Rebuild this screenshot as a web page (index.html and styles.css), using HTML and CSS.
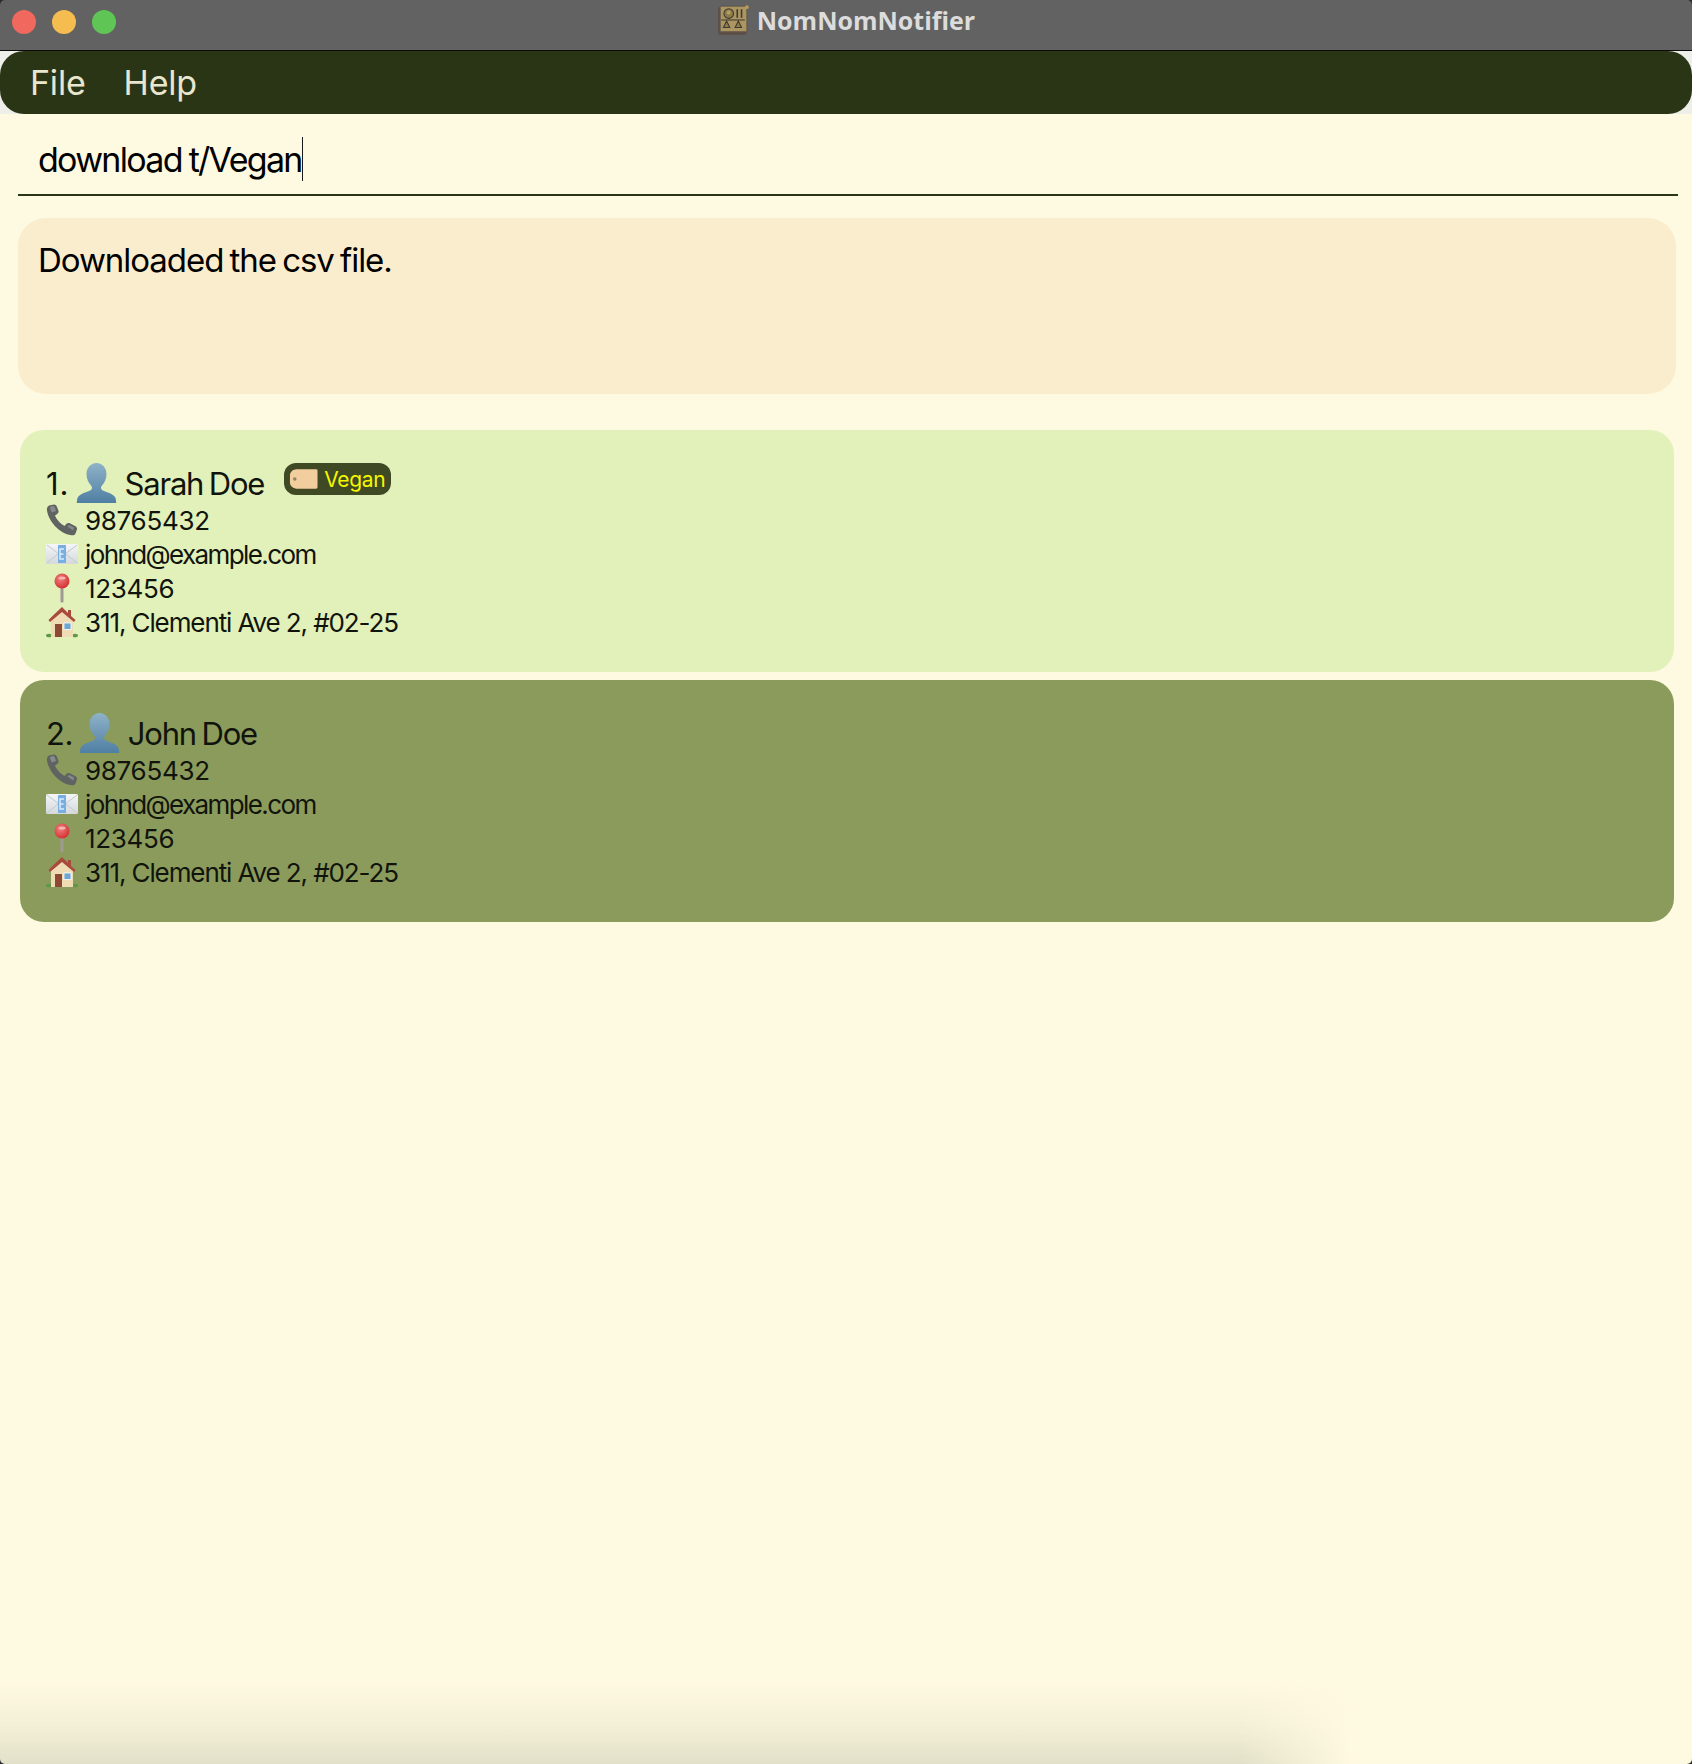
FILE: index.html
```html
<!DOCTYPE html>
<html lang="en">
<head>
<meta charset="utf-8">
<title>NomNomNotifier</title>
<link rel="stylesheet" href="styles.css">
</head>
<body>
<svg class="defs" width="0" height="0" aria-hidden="true">
  <defs>
    <linearGradient id="bust" x1="0" y1="0" x2="0" y2="1"><stop offset="0" stop-color="#8fb2c8"/><stop offset="1" stop-color="#4f7fa3"/></linearGradient>
    <linearGradient id="envl" x1="0" y1="0" x2="0" y2="1"><stop offset="0" stop-color="#f4f6f8"/><stop offset="1" stop-color="#d5d9dc"/></linearGradient>
    <radialGradient id="ball" cx=".4" cy=".35" r=".7"><stop offset="0" stop-color="#f08080"/><stop offset="1" stop-color="#d22c2c"/></radialGradient>
    <symbol id="i-person" viewBox="0 0 40 40">
      <path fill="url(#bust)" d="M20 0c6 0 10 5 10 11 0 5-2 9-5 12-.8 1-.7 3 .5 4 3 2 12 3.500 13.500 8 .6 2 .7 5 .7 5H.300s.1-3 .7-5C2.500 30.500 11.500 29 14.500 27c1.200-1 1.300-3 .5-4-3-3-5-7-5-12C10 5 14 0 20 0z"/>
    </symbol>
    <symbol id="i-phone" viewBox="0 0 32 32">
      <path fill="#5f6362" d="M3 1.500 8 .5c1.500 0 2.500 1 3 2.500l1.500 4c.3 1.200-.2 2-1 2.700L9 11.500c1 3.500 5.500 8.500 9.500 10.500l2-2.300c.8-.8 1.800-1 2.800-.6l5.700 2.800c1.500.8 2.300 2 2 3.300l-1.500 4.300c-.6 1.500-2.200 2-4 1.800C13 29.500 2.500 17 1 6.500.7 4 1.500 2.500 3 1.500z"/>
      <path fill="#868a88" d="M4 3l3-1c1 0 1.500.7 2 2l1 3-4 1.500C5 7 4 5 4 3zM21.500 22.500l1.500-1.500 5 2.500-.8 3z"/>
    </symbol>
    <symbol id="i-mail" viewBox="0 0 32 24">
      <rect x="0" y="2" width="32" height="20" rx="1.500" fill="url(#envl)"/>
      <path fill="none" stroke="#c4c9cc" d="M1 3l12 9M31 3l-12 9M1 21l11-9M31 21l-11-9"/>
      <rect x="12" y="3" width="8" height="18" rx=".5" fill="#78aee0"/>
      <path fill="none" stroke="#dcecf9" stroke-width="1.500" d="M18 7h-4v10h4M14 12h3.500"/>
    </symbol>
    <symbol id="i-pin" viewBox="0 0 20 30">
      <rect x="8.500" y="13" width="3" height="16.500" rx="1" fill="#a09a94"/>
      <circle cx="10" cy="8" r="7.500" fill="url(#ball)"/>
      <ellipse cx="10" cy="5" rx="3.500" ry="1.500" fill="#f7b4b4"/>
    </symbol>
    <symbol id="i-house" viewBox="0 0 32 32">
      <ellipse cx="3" cy="29.500" rx="3" ry="1.800" fill="#5c9a45"/>
      <ellipse cx="29" cy="29.500" rx="3" ry="1.800" fill="#5c9a45"/>
      <path fill="#efdcb5" d="M5 14 16 5l11 9v17H5z"/>
      <path fill="#a94a3c" d="M16 1 7 9.500 2.500 14l1.500 2L16 6l12 10 1.500-2L25 10V4h-3v3z"/>
      <rect x="9" y="18" width="7" height="13" fill="#8c4a35"/>
      <rect x="18" y="17" width="7" height="6.500" fill="#6fa6d2" stroke="#fff" stroke-width=".8"/>
    </symbol>
    <symbol id="i-tag" viewBox="0 0 30 22">
      <path fill="#f2cd9d" d="M8 1h20a1.500 1.500 0 0 1 1.500 1.500v17A1.500 1.500 0 0 1 28 21H8C4 21 1 18 1 15V7c0-3 3-6 7-6z"/>
      <circle cx="6" cy="11" r="1.800" fill="#8f8268"/>
    </symbol>
    <symbol id="i-app" viewBox="0 0 30 30">
      <rect x="1" y="3" width="27" height="26" rx="2" fill="#5d5048"/>
      <rect x="3" y="2" width="25" height="24" rx="1" fill="#ab9662" stroke="#5d5048" stroke-width=".8"/>
      <circle cx="11" cy="9" r="4.500" fill="#8f7b48" stroke="#3f3a30"/>
      <circle cx="11" cy="8" r="1.800" fill="#b7a064"/>
      <path stroke="#3f3a30" stroke-width="1.500" d="M19 5v8M23 5v8"/>
      <path fill="#8f7b48" stroke="#3f3a30" d="M9 16l3 6H6zM20 16l3 6h-6z"/>
      <path stroke="#3f3a30" d="M4 15h22"/>
      <circle cx="28" cy="3" r="1.800" fill="#b79a5c"/>
    </symbol>
  </defs>
</svg>

<div class="window">
  <header class="titlebar">
    <div class="lights">
      <span class="light light-red"></span>
      <span class="light light-yellow"></span>
      <span class="light light-green"></span>
    </div>
    <div class="title">
      <svg class="app-icon"><use href="#i-app"/></svg>
      <span>NomNomNotifier</span>
    </div>
  </header>

  <div class="menubar-wrap">
    <nav class="menubar">
      <span>File</span>
      <span>Help</span>
    </nav>
  </div>

  <main class="content">
    <div class="command"><span class="command-text">download t/Vegan</span><span class="caret"></span></div>
    <div class="result">Downloaded the csv file.</div>

    <section class="list">
      <article class="card card-light">
        <div class="name-row">
          <span class="num num-one">1.</span>
          <svg class="person"><use href="#i-person"/></svg>
          <span class="name">Sarah Doe</span>
          <span class="tag"><svg class="tag-icon"><use href="#i-tag"/></svg>Vegan</span>
        </div>
        <div class="row"><span class="ico"><svg class="ico-phone"><use href="#i-phone"/></svg></span>98765432</div>
        <div class="row row-email"><span class="ico"><svg class="ico-mail"><use href="#i-mail"/></svg></span>johnd@example.com</div>
        <div class="row"><span class="ico"><svg class="ico-pin"><use href="#i-pin"/></svg></span>123456</div>
        <div class="row row-address"><span class="ico"><svg class="ico-house"><use href="#i-house"/></svg></span>311, Clementi Ave 2, #02-25</div>
      </article>

      <article class="card card-dark">
        <div class="name-row">
          <span class="num">2.</span>
          <svg class="person"><use href="#i-person"/></svg>
          <span class="name">John Doe</span>
        </div>
        <div class="row"><span class="ico"><svg class="ico-phone"><use href="#i-phone"/></svg></span>98765432</div>
        <div class="row row-email"><span class="ico"><svg class="ico-mail"><use href="#i-mail"/></svg></span>johnd@example.com</div>
        <div class="row"><span class="ico"><svg class="ico-pin"><use href="#i-pin"/></svg></span>123456</div>
        <div class="row row-address"><span class="ico"><svg class="ico-house"><use href="#i-house"/></svg></span>311, Clementi Ave 2, #02-25</div>
      </article>
    </section>
  </main>

  <div class="dock-shadow"></div>
  <div class="screen-corners"></div>
</div>
</body>
</html>
```

FILE: styles.css
```css
* { box-sizing: border-box; }

html, body {
  margin: 0;
  padding: 0;
}

body {
  width: 1692px;
  height: 1764px;
  overflow: hidden;
  background: #fef9e1;
  font-family: Inter, "Liberation Sans", sans-serif;
  color: #11140c;
}

.defs { position: absolute; }

.window {
  position: relative;
  display: flex;
  flex-direction: column;
  height: 1764px;
  overflow: hidden;
}

.titlebar {
  flex: none;
  display: grid;
  grid-template-columns: 1fr auto 1fr;
  align-items: center;
  height: 51px;
  padding: 0 12px 7px;
  background: #626262;
  border-bottom: 1.500px solid #0c0c0c;
}

.lights { display: flex; gap: 16px; }

.light {
  width: 24px;
  height: 24px;
  border-radius: 50%;
}
.light-red { background: #f0685e; }
.light-yellow { background: #f5bd4f; }
.light-green { background: #5fc655; }

.title {
  display: flex;
  align-items: center;
  gap: 8px;
  margin-top: -3px;
  font-family: "Open Sans", Inter, sans-serif;
  font-size: 25px;
  font-weight: 700;
  color: #dcdcdc;
}

.app-icon { width: 32px; height: 32px; filter: blur(0.5px); }

.menubar-wrap {
  flex: none;
  background: #efefe9;
}

.menubar {
  display: flex;
  gap: 38px;
  align-items: center;
  height: 63px;
  padding: 0 0 1px 30px;
  background: #2a3516;
  border-radius: 24px;
  color: #e8e6cf;
  font-size: 34px;
  font-weight: 400;
  letter-spacing: -0.2px;
}

.content {
  flex: 1;
  display: flex;
  flex-direction: column;
}

.command {
  display: flex;
  align-items: center;
  height: 82px;
  margin: 0 14px 0 18px;
  padding: 10px 0 0 20px;
  border-bottom: 2px solid #2a3516;
  font-size: 34px;
  color: #000;
  letter-spacing: -1.7px;
  word-spacing: -1px;
}

.caret {
  width: 1.500px;
  height: 44px;
  background: #1a1a1a;
}

.result {
  height: 176px;
  margin: 22px 16px 0 18px;
  padding: 22px 20px;
  background: #faedcd;
  border-radius: 28px;
  font-size: 33px;
  line-height: 40px;
  color: #000;
  letter-spacing: -1.05px;
  word-spacing: -2px;
}

.list {
  display: flex;
  flex-direction: column;
  gap: 8px;
  margin: 36px 18px 0 20px;
}

.card {
  height: 242px;
  padding: 32px 26px 0;
  border-radius: 24px;
}
.card-light { background: #e2f0b9; }
.card-dark { background: #8b9b5b; }

.name-row {
  display: flex;
  align-items: center;
  height: 41px;
  font-size: 31px;
}

.num {
  padding-top: 2px;
  letter-spacing: -0.5px;
}
.num-one { letter-spacing: 1px; }

.person {
  width: 41px;
  height: 40px;
  margin: 0 8px 0 6px;
  filter: blur(0.5px);
}

.name {
  margin-right: 20px;
  padding-top: 2px;
  letter-spacing: -1.2px;
  word-spacing: -2px;
}

.tag {
  display: flex;
  align-items: center;
  gap: 6px;
  height: 32px;
  margin-top: -7px;
  padding: 0 6px 0 5px;
  border-radius: 12px;
  background: #3f4a25;
  color: #f6f600;
  font-size: 21px;
  letter-spacing: -0.3px;
}

.tag-icon { width: 29px; height: 22px; filter: blur(0.5px); }

.row {
  display: flex;
  align-items: center;
  height: 34px;
  font-size: 26px;
  letter-spacing: -0.3px;
}

.row-email { letter-spacing: -1.6px; }
.row-address { letter-spacing: -1.1px; word-spacing: 0; }

.ico {
  display: flex;
  flex: none;
  justify-content: center;
  align-items: center;
  width: 32px;
  height: 34px;
  margin-right: 7px;
}

.ico svg { filter: blur(0.5px); }

.ico-phone { width: 32px; height: 32px; }
.ico-mail { width: 32px; height: 24px; }
.ico-pin { width: 20px; height: 30px; }
.ico-house { width: 32px; height: 32px; }

.dock-shadow {
  position: absolute;
  left: 0;
  bottom: 0;
  width: 1350px;
  height: 80px;
  background: linear-gradient(to bottom, rgba(226, 224, 200, 0), rgba(226, 224, 200, 0.35) 50%, #e2e0c8);
  -webkit-mask-image: linear-gradient(to right, #000 1240px, transparent 1350px);
  mask-image: linear-gradient(to right, #000 1240px, transparent 1350px);
}

.screen-corners {
  position: absolute;
  inset: 0;
  border-radius: 5px;
  box-shadow: 0 0 0 8px #2a2a2a;
  pointer-events: none;
}
```
